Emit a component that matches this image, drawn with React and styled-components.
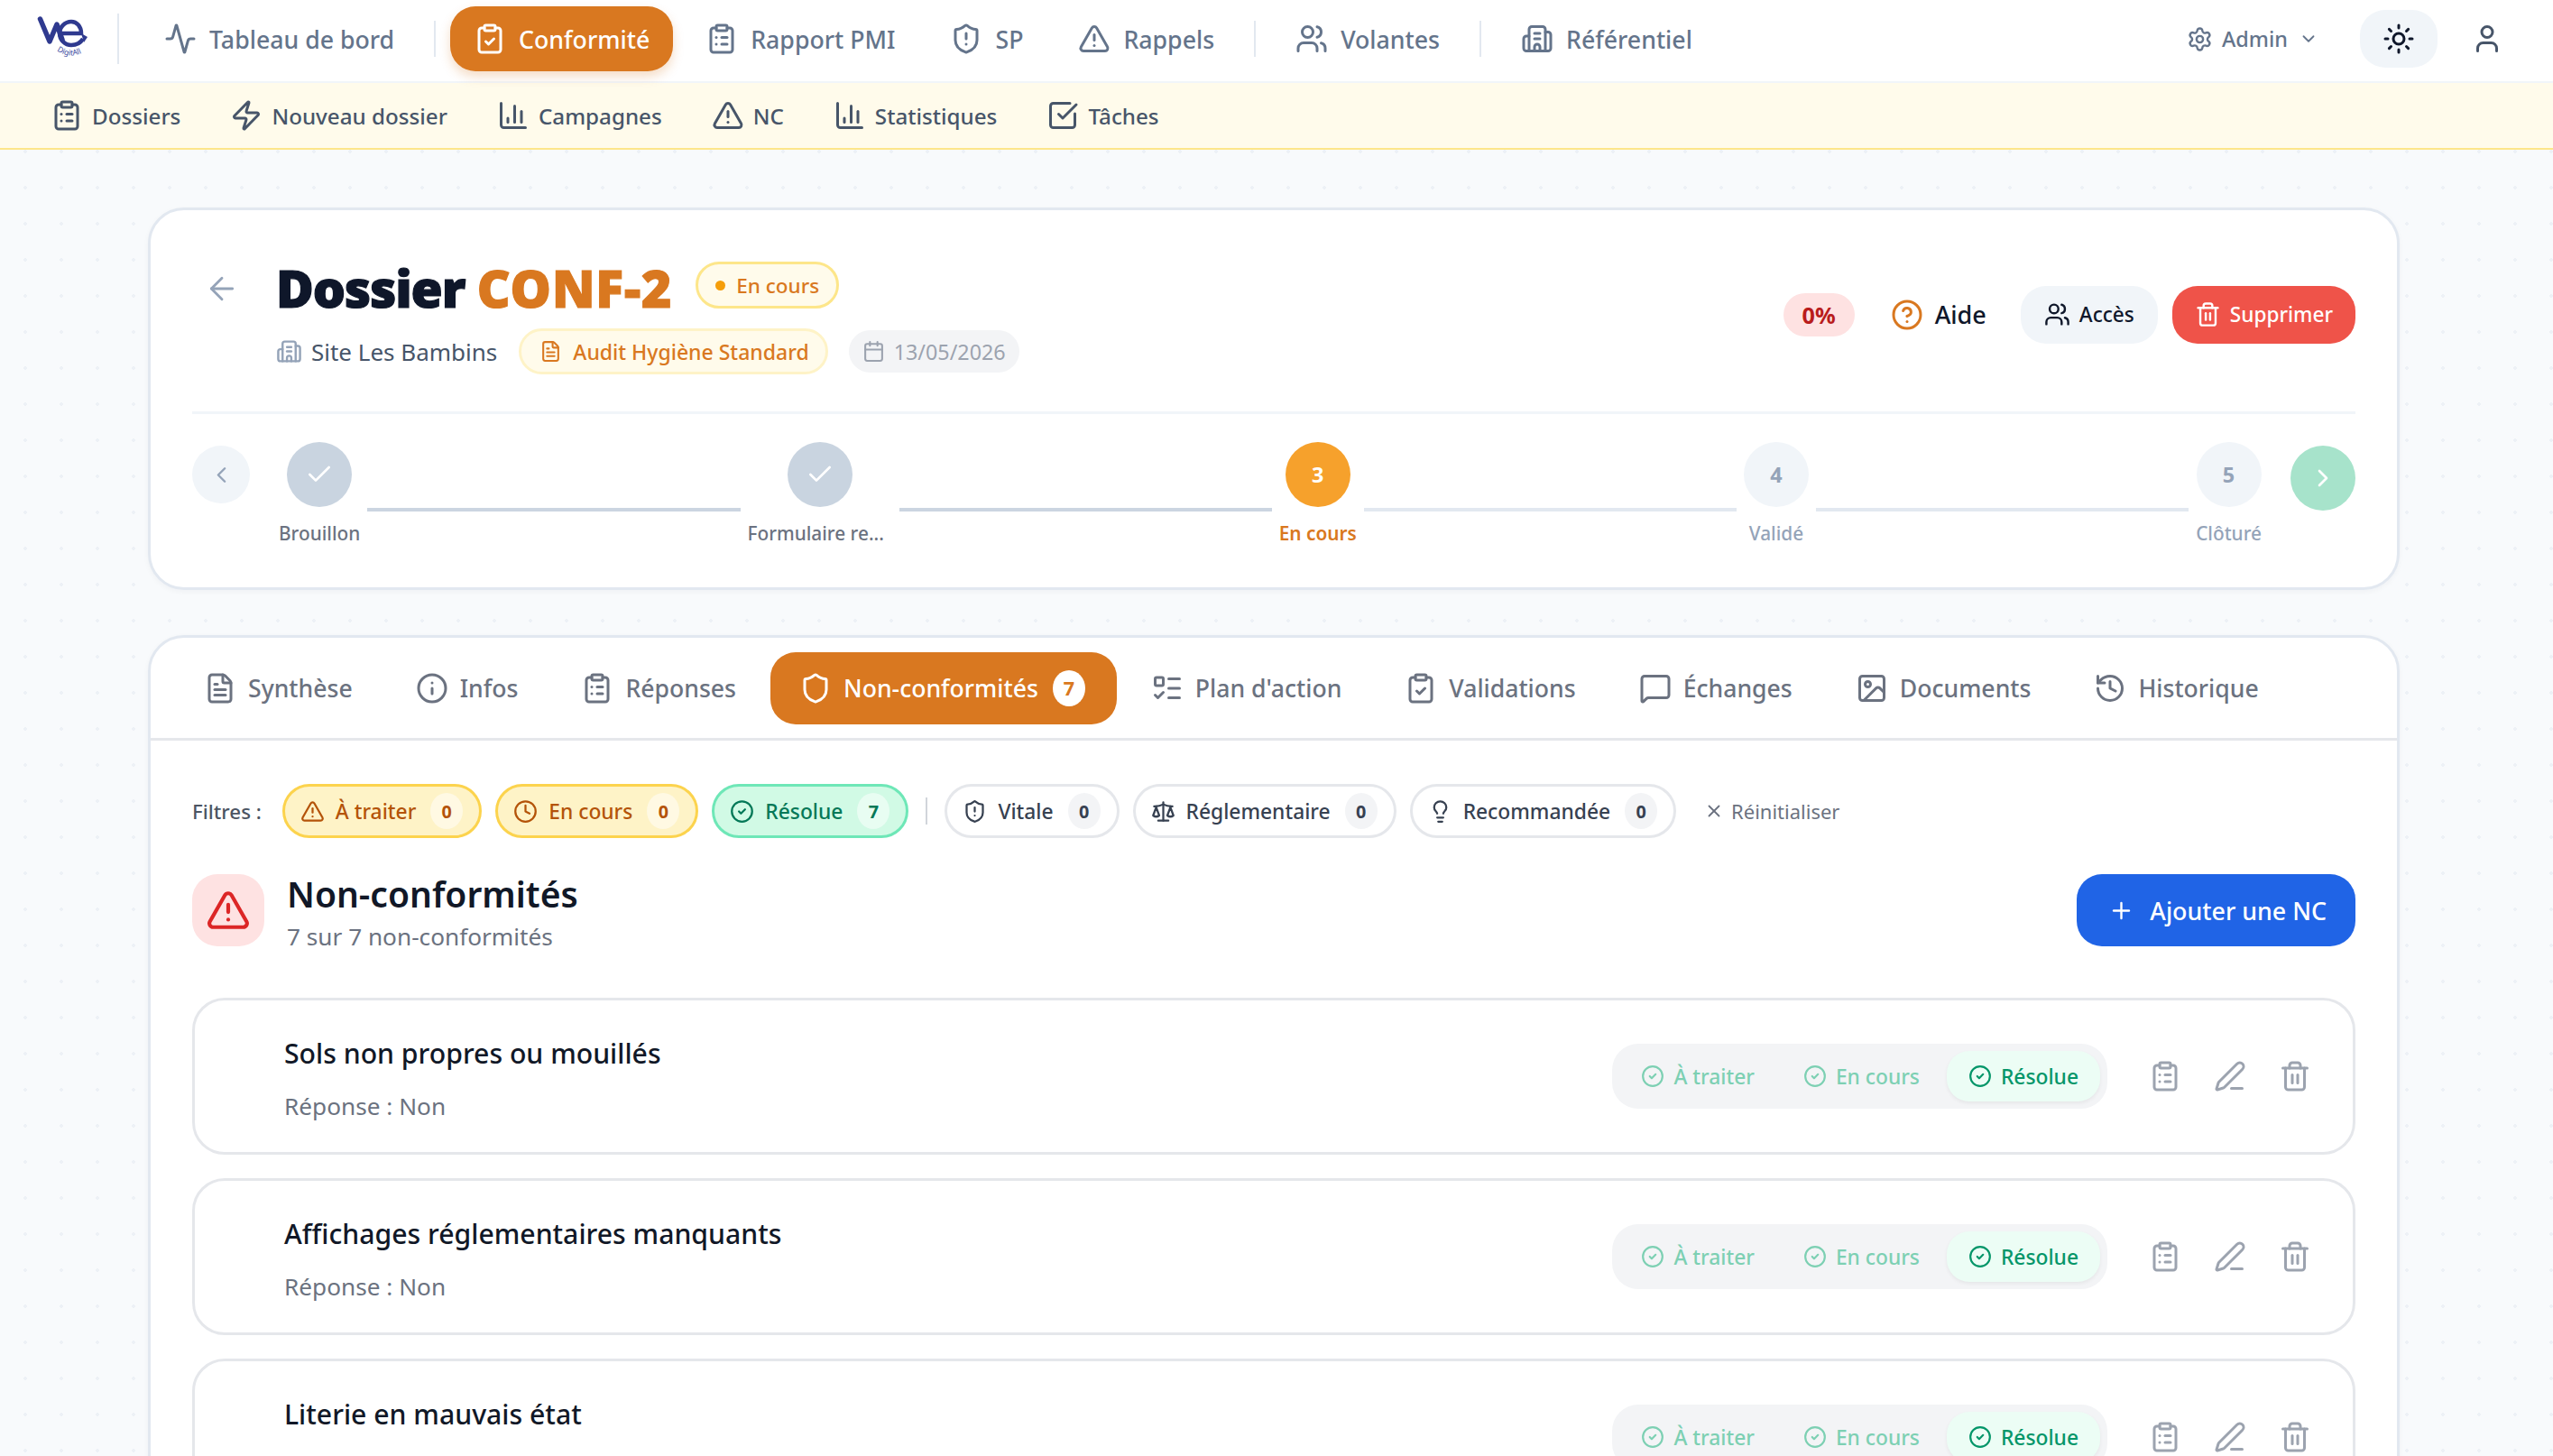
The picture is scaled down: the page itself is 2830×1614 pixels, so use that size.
import styled, {createGlobalStyle} from 'styled-components';
import {
    Activity, ArrowLeft, Building2, Calendar, ChartColumn, Check, ChevronDown, ChevronLeft, ChevronRight,
    CircleCheck, CircleHelp, ClipboardCheck, ClipboardList, Clock, FileText, History, Image, Info, Lightbulb,
    ListTodo, MessageSquare, PenLine, Plus, Scale, Settings, Shield, ShieldAlert, SquareCheckBig, Sun, Trash2,
    TriangleAlert, User, Users, X, Zap,
} from 'lucide-react';

const GlobalStyle = createGlobalStyle`
  html, body {
    margin: 0;
    height: 1614px;
    overflow: hidden;
    background: #f8fafc;
    font-family: "Noto Sans", "Open Sans", sans-serif;
  }
  * { box-sizing: border-box; }
`;

const Screen = styled.div`
  height: 1614px;
  overflow: hidden;
  background-color: #f8fafc;
  background-image: radial-gradient(#edf1f6 2px, transparent 2px);
  background-size: 40px 40px;
  background-position: 8px -12px;
`;

const TopNav = styled.header`
  display: flex;
  align-items: center;
  height: 92px;
  padding: 0 55px 4px 42px;
  gap: 11px;
  background: #fff;
  border-bottom: 2px solid #f1f5f9;
`;

const Logo = styled.svg`
  width: 56px;
  height: 50px;
  flex: none;
  overflow: visible;
`;

const LogoDivider = styled.span`
  width: 2px;
  height: 56px;
  margin: 0 14px 0 21px;
  background: #e2e8f0;
`;

const NavItem = styled.a`
  display: flex;
  align-items: center;
  gap: 14px;
  height: 72px;
  padding: 0 ${(p) => (p.$active ? '26px' : '25px')};
  margin-left: ${(p) => (p.$active ? '-3px' : '0')};
  border-radius: 28px;
  font-size: 26.7px;
  font-weight: 500;
  color: ${(p) => (p.$active ? '#fff' : '#64748b')};
  background: ${(p) => (p.$active ? '#d97820' : 'transparent')};
  box-shadow: ${(p) => (p.$active ? '0 6px 12px rgba(217,120,32,.25)' : 'none')};
  white-space: nowrap;
`;

const NavDivider = styled.span`
  width: 2px;
  height: 40px;
  margin: 0 8px;
  background: #e2e8f0;
`;

const NavRight = styled.div`
  display: flex;
  align-items: center;
  margin-left: auto;
`;

const AdminMenu = styled.div`
  display: flex;
  align-items: center;
  gap: 10px;
  margin-right: 46px;
  font-size: 23.4px;
  font-weight: 500;
  color: #64748b;

  & > svg:last-child {
    margin-left: 2px;
  }
`;

const ThemeButton = styled.button`
  display: flex;
  align-items: center;
  justify-content: center;
  width: 86px;
  height: 64px;
  margin-right: 37px;
  border: 0;
  border-radius: 28px;
  background: #f1f5f9;
  color: #0f172a;
`;

const UserButton = styled.span`
  display: flex;
  color: #475569;
`;

const SubNav = styled.nav`
  display: flex;
  align-items: center;
  gap: 55px;
  height: 74px;
  padding: 0 0 0 56px;
  background: #fffbeb;
  border-bottom: 2px solid #fde68a;
`;

const SubItem = styled.a`
  display: flex;
  align-items: center;
  gap: 10px;
  font-size: 24.2px;
  font-weight: 500;
  color: #475569;
  white-space: nowrap;
`;

const Main = styled.main`
  display: flex;
  flex-direction: column;
  gap: 50px;
  padding: 64px 170px 0 164px;
`;

const Card = styled.section`
  background: #fff;
  border: 3px solid #e2e8f0;
  border-radius: 40px;
  box-shadow: 0 2px 6px rgba(15, 23, 42, 0.04);
`;

const DossierCard = styled(Card)`
  padding: 57px 46px 44px;
`;

const Header = styled.div`
  display: flex;
  align-items: flex-start;
  padding-bottom: 41px;
  border-bottom: 3px solid #f1f5f9;
`;

const BackLink = styled.span`
  display: flex;
  margin: 10px 40px 0 13px;
  color: #94a3b8;
`;

const HeaderBody = styled.div`
  display: flex;
  flex-direction: column;
  gap: 22px;
`;

const TitleRow = styled.div`
  display: flex;
  align-items: center;
  gap: 26px;
`;

const Title = styled.h1`
  margin: 3px 0 -3px;
  font-size: 57px;
  line-height: 52px;
  font-weight: 900;
  letter-spacing: -1.2px;
  -webkit-text-stroke: 1.2px currentColor;
  color: #0f172a;
  white-space: nowrap;

  & > span {
    letter-spacing: 0.9px;
    color: #d97820;
  }
`;

const StatusPill = styled.span`
  display: flex;
  align-items: center;
  gap: 12px;
  height: 52px;
  padding: 0 19px;
  border: 3px solid #fde68a;
  border-radius: 26px;
  background: #fffbeb;
  font-size: 22.5px;
  font-weight: 500;
  color: #d97820;

  &::before {
    content: '';
    width: 11px;
    height: 11px;
    border-radius: 50%;
    background: #f59e0b;
  }
`;

const MetaRow = styled.div`
  display: flex;
  align-items: center;
`;

const Site = styled.span`
  display: flex;
  align-items: center;
  gap: 10px;
  margin-right: 24px;
  font-size: 26px;
  color: #475569;

  & > svg {
    color: #94a3b8;
  }
`;

const TemplateChip = styled.span`
  display: flex;
  align-items: center;
  gap: 12px;
  height: 51px;
  padding: 0 18px 0 20px;
  margin-right: 23px;
  border: 3px solid #fef3c7;
  border-radius: 26px;
  background: #fffbeb;
  font-size: 23px;
  font-weight: 500;
  color: #d97820;
`;

const DateChip = styled.span`
  display: flex;
  align-items: center;
  gap: 10px;
  height: 47px;
  padding: 0 15px;
  border-radius: 24px;
  background: #f3f4f6;
  font-size: 23.3px;
  color: #9ca3af;
`;

const Actions = styled.div`
  display: flex;
  align-items: center;
  align-self: center;
  margin: 0 0 8px auto;
`;

const ScoreBadge = styled.span`
  display: flex;
  align-items: center;
  height: 48px;
  padding: 0 21px;
  margin-right: 40px;
  border-radius: 24px;
  background: #fee2e2;
  font-size: 25.2px;
  font-weight: 700;
  color: #b91c1c;
`;

const HelpLink = styled.span`
  display: flex;
  align-items: center;
  gap: 13px;
  margin-right: 38px;
  font-size: 27px;
  font-weight: 500;
  color: #0f172a;

  & > svg {
    color: #d97820;
  }
`;

const ActionButton = styled.button`
  display: flex;
  align-items: center;
  gap: 10px;
  height: 64px;
  padding: 0 ${(p) => (p.$danger ? '25px' : '26px')};
  margin-left: ${(p) => (p.$danger ? '16px' : '0')};
  border: 0;
  border-radius: 28px;
  font-family: inherit;
  font-size: 22.6px;
  font-weight: 500;
  color: ${(p) => (p.$danger ? '#fff' : '#0f172a')};
  background: ${(p) => (p.$danger ? '#ef5349' : '#f1f5f9')};
`;

const Stepper = styled.div`
  display: flex;
  align-items: flex-start;
  gap: 32px;
  margin-top: 31px;
`;

const StepNav = styled.span`
  display: flex;
  align-items: center;
  justify-content: center;
  flex: none;
  width: ${(p) => (p.$next ? '72px' : '64px')};
  height: ${(p) => (p.$next ? '72px' : '64px')};
  margin-top: 4px;
  border-radius: 50%;
  color: ${(p) => (p.$next ? '#fff' : '#94a3b8')};
  background: ${(p) => (p.$next ? '#a7e3cb' : '#f1f5f9')};
`;

const Steps = styled.div`
  display: flex;
  align-items: flex-start;
  flex: 1;
`;

const Step = styled.div`
  display: flex;
  flex-direction: column;
  align-items: center;
  flex: none;
  min-width: 72px;
`;

const STEP_COLORS = {
    done: {bg: '#c9d4e0', fg: '#fff', label: '#6b7280'},
    current: {bg: '#f6a12c', fg: '#fff', label: '#d97820'},
    todo: {bg: '#f1f5f9', fg: '#94a3b8', label: '#94a3b8'},
};

const StepCircle = styled.span`
  display: flex;
  align-items: center;
  justify-content: center;
  width: 72px;
  height: 72px;
  border-radius: 50%;
  font-size: 23.4px;
  font-weight: 700;
  color: ${(p) => STEP_COLORS[p.$state].fg};
  background: ${(p) => STEP_COLORS[p.$state].bg};
`;

const StepLabel = styled.span`
  width: ${(p) => (p.$wide ? '160px' : 'auto')};
  margin-top: 13px;
  font-size: 20.8px;
  line-height: 32px;
  font-weight: ${(p) => (p.$state === 'current' ? 600 : 500)};
  white-space: nowrap;
  color: ${(p) => STEP_COLORS[p.$state].label};
`;

const StepLine = styled.span`
  flex: 1;
  height: 4px;
  margin: 73px 8px 0;
  background: ${(p) => (p.$done ? '#cbd5e1' : '#e2e8f0')};
`;

const Tabs = styled.div`
  display: flex;
  align-items: center;
  gap: 6px;
  height: 114px;
  padding: 0 27px;
  border-bottom: 3px solid #e5e7eb;
`;

const Tab = styled.a`
  display: flex;
  align-items: center;
  gap: 13px;
  height: 80px;
  padding: 0 ${(p) => (p.$active ? '35px' : '32px')} 0 32px;
  border-radius: 28px;
  font-size: 26.6px;
  font-weight: 500;
  white-space: nowrap;
  color: ${(p) => (p.$active ? '#fff' : '#6b7280')};
  background: ${(p) => (p.$active ? '#d97820' : 'transparent')};
`;

const TabCount = styled.span`
  display: flex;
  align-items: center;
  justify-content: center;
  width: 36px;
  height: 40px;
  margin-left: 3px;
  border-radius: 50%;
  background: #fff;
  font-size: 21.6px;
  font-weight: 700;
  color: #d97820;
`;

const Content = styled.div`
  padding: 48px 46px 0;
`;

const Filters = styled.div`
  display: flex;
  align-items: center;
  gap: 15px;
`;

const FiltersLabel = styled.span`
  margin-right: 8px;
  font-size: 22.3px;
  font-weight: 500;
  color: #4b5563;
`;

const CHIP_TONES = {
    amber: {bg: '#fef3c7', border: '#fcd34d', fg: '#b45309', count: 'rgba(255,255,255,.5)'},
    green: {bg: '#d1fae5', border: '#6ee7b7', fg: '#047857', count: 'rgba(255,255,255,.5)'},
    plain: {bg: '#fff', border: '#e5e7eb', fg: '#374151', count: '#f3f4f6'},
};

const Chip = styled.button`
  display: flex;
  align-items: center;
  gap: 12px;
  height: 60px;
  padding: 0 18px 0 17px;
  border: 3px solid ${(p) => CHIP_TONES[p.$tone].border};
  border-radius: 30px;
  background: ${(p) => CHIP_TONES[p.$tone].bg};
  font-family: inherit;
  font-size: 22.8px;
  font-weight: 500;
  color: ${(p) => CHIP_TONES[p.$tone].fg};
`;

const ChipCount = styled.span`
  display: flex;
  align-items: center;
  justify-content: center;
  width: 36px;
  height: 40px;
  margin-left: 4px;
  border-radius: 50%;
  font-size: 19.8px;
  font-weight: 700;
  background: ${(p) => CHIP_TONES[p.$tone].count};
`;

const FilterDivider = styled.span`
  width: 2px;
  height: 30px;
  margin: 0 4px;
  background: #d1d5db;
`;

const ResetLink = styled.span`
  display: flex;
  align-items: center;
  gap: 8px;
  margin-left: 16px;
  font-size: 22px;
  color: #6b7280;
`;

const SectionHead = styled.div`
  display: flex;
  align-items: flex-start;
  gap: 25px;
  margin-top: 40px;
`;

const SectionIcon = styled.span`
  display: flex;
  align-items: center;
  justify-content: center;
  width: 80px;
  height: 80px;
  border-radius: 28px;
  background: #fee2e2;
  color: #dc2626;
`;

const SectionText = styled.div`
  display: flex;
  flex-direction: column;
  gap: 7px;
`;

const SectionTitle = styled.h2`
  margin: 0;
  font-size: 39px;
  line-height: 44px;
  font-weight: 600;
  color: #111827;
`;

const SectionSub = styled.span`
  font-size: 26.2px;
  line-height: 36px;
  color: #6b7280;
`;

const AddButton = styled.button`
  display: flex;
  align-items: center;
  gap: 17px;
  height: 80px;
  padding: 0 32px 0 35px;
  margin-left: auto;
  border: 0;
  border-radius: 28px;
  background: #2064e6;
  font-family: inherit;
  font-size: 26.8px;
  font-weight: 500;
  color: #fff;
`;

const RowList = styled.div`
  display: flex;
  flex-direction: column;
  gap: 26px;
  margin-top: 50px;
`;

const Row = styled.article`
  display: flex;
  align-items: center;
  height: 174px;
  padding: 0 46px 0 99px;
  border: 3px solid #e5e7eb;
  border-radius: 36px;
  background: #fff;
`;

const RowBody = styled.div`
  display: flex;
  flex-direction: column;
  gap: 18px;
  padding-top: 4px;
`;

const RowTitle = styled.h3`
  margin: 0;
  font-size: 30.2px;
  line-height: 44px;
  font-weight: 500;
  color: #111827;
`;

const RowSub = styled.span`
  font-size: 26.2px;
  line-height: 36px;
  color: #6b7280;
`;

const Segments = styled.div`
  display: flex;
  align-items: center;
  gap: 6px;
  height: 72px;
  padding: 0 8px;
  margin-left: auto;
  border-radius: 29px;
  background: #f3f4f6;
`;

const Segment = styled.span`
  display: flex;
  align-items: center;
  gap: 10px;
  height: 56px;
  padding: 0 24px;
  border-radius: 25px;
  font-size: 22.8px;
  font-weight: 500;
  color: ${(p) => (p.$active ? '#059669' : '#7dd0b3')};
  background: ${(p) => (p.$active ? '#ecfdf5' : 'transparent')};
  box-shadow: ${(p) => (p.$active ? '0 2px 4px rgba(0,0,0,.06)' : 'none')};
`;

const RowTools = styled.div`
  display: flex;
  align-items: center;
  gap: 36px;
  margin-left: 46px;
  color: #9ca3af;
`;

const RowIcon = styled.span`
  display: flex;
`;

const DigitAllLogo = () => (
    <Logo viewBox="0 0 56 50" fill="none">
        <path d="M2.5 3 L13 28 L21 9 L27 26" stroke="#2f3a8f" strokeWidth="5.5" strokeLinecap="round" strokeLinejoin="round"/>
        <path d="M24 19 H48 C48 11 43 6 37 6 C30 6 24 12 24 19 C24 26 30 32 37 32 C43 32 47 30 50 25" stroke="#2f3a8f"
              strokeWidth="4.5"/>
        <path d="M48 19 L55 23 L51 29 Z" fill="#2f3a8f"/>
        <path id="logoArc" d="M21 38 Q38 50 56 36" stroke="none"/>
        <text fontFamily="Noto Sans, sans-serif" fontSize="8.6" fill="#3d4aa0">
            <textPath href="#logoArc">DigitAll</textPath>
        </text>
    </Logo>
);

const NC_ROWS = ['Sols non propres ou mouillés', 'Affichages réglementaires manquants', 'Literie en mauvais état'];

export default function App() {
    return (
        <Screen>
            <GlobalStyle/>
            <TopNav>
                <DigitAllLogo/>
                <LogoDivider/>
                <NavItem><Activity size={36}/>Tableau de bord</NavItem>
                <NavDivider/>
                <NavItem $active><ClipboardCheck size={36}/>Conformité</NavItem>
                <NavItem><ClipboardList size={36}/>Rapport PMI</NavItem>
                <NavItem><ShieldAlert size={36}/>SP</NavItem>
                <NavItem><TriangleAlert size={36}/>Rappels</NavItem>
                <NavDivider/>
                <NavItem><Users size={36}/>Volantes</NavItem>
                <NavDivider/>
                <NavItem><Building2 size={36}/>Référentiel</NavItem>
                <NavRight>
                    <AdminMenu><Settings size={29}/>Admin<ChevronDown size={22}/></AdminMenu>
                    <ThemeButton><Sun size={36}/></ThemeButton>
                    <UserButton><User size={36}/></UserButton>
                </NavRight>
            </TopNav>

            <SubNav>
                <SubItem><ClipboardList size={36}/>Dossiers</SubItem>
                <SubItem><Zap size={36}/>Nouveau dossier</SubItem>
                <SubItem><ChartColumn size={36}/>Campagnes</SubItem>
                <SubItem><TriangleAlert size={36}/>NC</SubItem>
                <SubItem><ChartColumn size={36}/>Statistiques</SubItem>
                <SubItem><SquareCheckBig size={36}/>Tâches</SubItem>
            </SubNav>

            <Main>
                <DossierCard>
                    <Header>
                        <BackLink><ArrowLeft size={40} strokeWidth={1.7}/></BackLink>
                        <HeaderBody>
                            <TitleRow>
                                <Title>Dossier <span>CONF-2</span></Title>
                                <StatusPill>En cours</StatusPill>
                            </TitleRow>
                            <MetaRow>
                                <Site><Building2 size={29}/>Site Les Bambins</Site>
                                <TemplateChip><FileText size={25}/>Audit Hygiène Standard</TemplateChip>
                                <DateChip><Calendar size={25}/>13/05/2026</DateChip>
                            </MetaRow>
                        </HeaderBody>
                        <Actions>
                            <ScoreBadge>0%</ScoreBadge>
                            <HelpLink><CircleHelp size={36}/>Aide</HelpLink>
                            <ActionButton><Users size={29}/>Accès</ActionButton>
                            <ActionButton $danger><Trash2 size={29}/>Supprimer</ActionButton>
                        </Actions>
                    </Header>

                    <Stepper>
                        <StepNav><ChevronLeft size={29}/></StepNav>
                        <Steps>
                            <Step>
                                <StepCircle $state="done"><Check size={32}/></StepCircle>
                                <StepLabel $state="done">Brouillon</StepLabel>
                            </Step>
                            <StepLine $done/>
                            <Step>
                                <StepCircle $state="done"><Check size={32}/></StepCircle>
                                <StepLabel $state="done" $wide>Formulaire re...</StepLabel>
                            </Step>
                            <StepLine $done/>
                            <Step>
                                <StepCircle $state="current">3</StepCircle>
                                <StepLabel $state="current">En cours</StepLabel>
                            </Step>
                            <StepLine/>
                            <Step>
                                <StepCircle $state="todo">4</StepCircle>
                                <StepLabel $state="todo">Validé</StepLabel>
                            </Step>
                            <StepLine/>
                            <Step>
                                <StepCircle $state="todo">5</StepCircle>
                                <StepLabel $state="todo">Clôturé</StepLabel>
                            </Step>
                        </Steps>
                        <StepNav $next><ChevronRight size={32}/></StepNav>
                    </Stepper>
                </DossierCard>

                <Card>
                    <Tabs>
                        <Tab><FileText size={36}/>Synthèse</Tab>
                        <Tab><Info size={36}/>Infos</Tab>
                        <Tab><ClipboardList size={36}/>Réponses</Tab>
                        <Tab $active><Shield size={36}/>Non-conformités<TabCount>7</TabCount></Tab>
                        <Tab><ListTodo size={36}/>Plan d'action</Tab>
                        <Tab><ClipboardCheck size={36}/>Validations</Tab>
                        <Tab><MessageSquare size={36}/>Échanges</Tab>
                        <Tab><Image size={36}/>Documents</Tab>
                        <Tab><History size={36}/>Historique</Tab>
                    </Tabs>

                    <Content>
                        <Filters>
                            <FiltersLabel>Filtres :</FiltersLabel>
                            <Chip $tone="amber"><TriangleAlert size={27}/>À traiter<ChipCount $tone="amber">0</ChipCount></Chip>
                            <Chip $tone="amber"><Clock size={27}/>En cours<ChipCount $tone="amber">0</ChipCount></Chip>
                            <Chip $tone="green"><CircleCheck size={27}/>Résolue<ChipCount $tone="green">7</ChipCount></Chip>
                            <FilterDivider/>
                            <Chip $tone="plain"><ShieldAlert size={27}/>Vitale<ChipCount $tone="plain">0</ChipCount></Chip>
                            <Chip $tone="plain"><Scale size={27}/>Réglementaire<ChipCount $tone="plain">0</ChipCount></Chip>
                            <Chip $tone="plain"><Lightbulb size={27}/>Recommandée<ChipCount $tone="plain">0</ChipCount></Chip>
                            <ResetLink><X size={22}/>Réinitialiser</ResetLink>
                        </Filters>

                        <SectionHead>
                            <SectionIcon><TriangleAlert size={50}/></SectionIcon>
                            <SectionText>
                                <SectionTitle>Non-conformités</SectionTitle>
                                <SectionSub>7 sur 7 non-conformités</SectionSub>
                            </SectionText>
                            <AddButton><Plus size={29}/>Ajouter une NC</AddButton>
                        </SectionHead>

                        <RowList>
                            {NC_ROWS.map((title) => (
                                <Row key={title}>
                                    <RowBody>
                                        <RowTitle>{title}</RowTitle>
                                        <RowSub>Réponse : Non</RowSub>
                                    </RowBody>
                                    <Segments>
                                        <Segment><CircleCheck size={26}/>À traiter</Segment>
                                        <Segment><CircleCheck size={26}/>En cours</Segment>
                                        <Segment $active><CircleCheck size={26}/>Résolue</Segment>
                                    </Segments>
                                    <RowTools>
                                        <RowIcon><ClipboardList size={36}/></RowIcon>
                                        <RowIcon><PenLine size={36}/></RowIcon>
                                        <RowIcon><Trash2 size={36}/></RowIcon>
                                    </RowTools>
                                </Row>
                            ))}
                        </RowList>
                    </Content>
                </Card>
            </Main>
        </Screen>
    );
}
